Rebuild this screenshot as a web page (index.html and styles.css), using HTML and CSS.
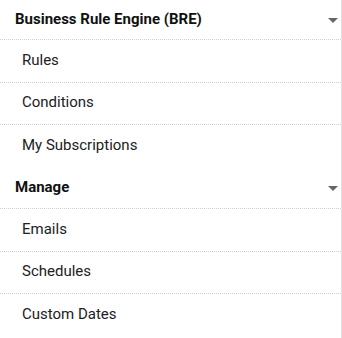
FILE: index.html
```html
<!DOCTYPE html>
<html lang="en">
<head>
  <meta charset="UTF-8" />
  <meta name="viewport" content="width=device-width, initial-scale=1.0"/>
  <title>Menu</title>
  <link rel="stylesheet" href="styles.css">
</head>
<body>
  <nav class="menu">
    <div class="group">
      <div class="group-head first">
        <span>Business Rule Engine (BRE)</span>
        <span class="caret"></span>
      </div>
      <a class="item" href="#">Rules</a>
      <a class="item" href="#">Conditions</a>
      <a class="item last" href="#">My Subscriptions</a>
    </div>

    <div class="group">
      <div class="group-head">
        <span>Manage</span>
        <span class="caret"></span>
      </div>
      <a class="item" href="#">Emails</a>
      <a class="item" href="#">Schedules</a>
      <a class="item last" href="#">Custom Dates</a>
    </div>
  </nav>
</body>
</html>
```

FILE: styles.css
```css
body {
  margin: 0;
  font-family: Roboto, "Liberation Sans", Arial, sans-serif;
  background-color: #fff;
  color: #212121;
}

.menu {
  width: 341px;
  height: 338px;
  border-right: 1px solid #e2e2e2;
  overflow: hidden;
}

.group-head {
  display: flex;
  align-items: center;
  justify-content: space-between;
  height: 41.5px;
  padding: 0 3px 1px 15px;
  box-sizing: border-box;
  font-size: 15px;
  font-weight: 700;
  color: #111;
  border-bottom: 1px dotted #cfcfcf;
}

.group-head.first {
  height: 40px;
}

.caret {
  width: 0;
  height: 0;
  margin-top: 2px;
  border-left: 5px solid transparent;
  border-right: 5px solid transparent;
  border-top: 5px solid #666;
}

.item {
  display: flex;
  align-items: center;
  height: 42.5px;
  padding: 0 0 2px 22px;
  box-sizing: border-box;
  font-size: 15px;
  color: #212121;
  text-decoration: none;
  border-bottom: 1px dotted #cfcfcf;
}

.item.last {
  border-bottom: none;
}
```
